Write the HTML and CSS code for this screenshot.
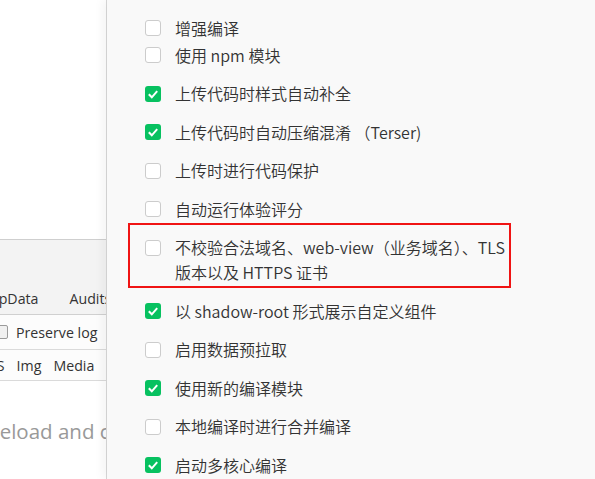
FILE: index.html
```html
<!DOCTYPE html>
<html lang="zh-CN">
<head>
  <meta charset="UTF-8" />
  <meta name="viewport" content="width=device-width, initial-scale=1.0"/>
  <title>详情 - 本地设置</title>
  <link rel="stylesheet" href="styles.css">
</head>
<body>

  <div class="page">
    <!-- devtools behind the panel -->
    <div class="devtools">
      <div class="dt-top"></div>
      <div class="dt-tabs">
        <span class="tab first">AppData</span>
        <span class="tab">Audits</span>
      </div>
      <div class="dt-filter">
        <span class="mini-check"></span>
        <span>Preserve log</span>
      </div>
      <div class="dt-types">
        <span class="first">JS</span>
        <span>Img</span>
        <span>Media</span>
      </div>
      <div class="dt-empty">
        <span>Reload and capture</span>
      </div>
    </div>

    <!-- local settings -->
    <div class="settings">
      <ul class="opts">
        <li class="opt tight"><span class="check"></span><span class="opt-text">增强编译</span></li>
        <li class="opt"><span class="check"></span><span class="opt-text">使用 npm 模块</span></li>
        <li class="opt"><span class="check on"></span><span class="opt-text">上传代码时样式自动补全</span></li>
        <li class="opt"><span class="check on"></span><span class="opt-text">上传代码时自动压缩混淆 （Terser)</span></li>
        <li class="opt"><span class="check"></span><span class="opt-text">上传时进行代码保护</span></li>
        <li class="opt"><span class="check"></span><span class="opt-text">自动运行体验评分</span></li>
        <li class="opt marked">
          <span class="check"></span>
          <span class="opt-text">不校验合法域名、web-view（业务域名）、TLS 版本以及 HTTPS 证书</span>
          <span class="mark"></span>
        </li>
        <li class="opt"><span class="check on"></span><span class="opt-text">以 shadow-root 形式展示自定义组件</span></li>
        <li class="opt"><span class="check"></span><span class="opt-text">启用数据预拉取</span></li>
        <li class="opt"><span class="check on"></span><span class="opt-text">使用新的编译模块</span></li>
        <li class="opt"><span class="check"></span><span class="opt-text">本地编译时进行合并编译</span></li>
        <li class="opt"><span class="check on"></span><span class="opt-text">启动多核心编译</span></li>
      </ul>
    </div>
  </div>

</body>
</html>
```

FILE: styles.css
```css
body {
  margin: 0;
  padding: 0;
  height: 479px;
  overflow: hidden;
  background: #fff;
}

.page {
  display: flex;
  height: 479px;
}

/* ---- devtools (left, mostly covered) ---- */

.devtools {
  width: 106px;
  flex-shrink: 0;
  overflow: hidden;
  border-right: 1px solid #d9d9d9;
  font-family: 'Open Sans', 'Noto Sans', sans-serif;
  font-size: 14.2px;
  color: #333;
  white-space: nowrap;
}

.dt-top {
  height: 239px;
  background: #fff;
  border-bottom: 1px solid #cfcfcf;
}

.dt-tabs {
  height: 75px;
  background: #f3f3f3;
  border-bottom: 1px solid #d0d0d0;
  display: flex;
  align-items: flex-end;
  padding-bottom: 5px;
  box-sizing: border-box;
  line-height: 20px;
}

.dt-tabs .first {
  margin-left: -19px;
}

.dt-tabs .tab + .tab {
  margin-left: 31px;
}

.dt-filter {
  height: 34px;
  border-bottom: 1px solid #dadada;
  display: flex;
  align-items: center;
  gap: 8px;
  background: #fcfcfc;
}

.mini-check {
  width: 12px;
  height: 12px;
  margin-left: -6px;
  border: 1px solid #9a9a9a;
  border-radius: 2px;
  background: #f0f0f0;
}

.dt-types {
  height: 30px;
  border-bottom: 1px solid #dadada;
  display: flex;
  align-items: center;
  gap: 12px;
  background: #fcfcfc;
}

.dt-types .first {
  margin-left: -7px;
}

.dt-empty {
  padding-top: 38px;
  font-size: 20.5px;
  line-height: 24px;
  color: #999;
}

.dt-empty span {
  display: block;
  margin-left: -13px;
}

/* ---- settings panel ---- */

.settings {
  flex: 1;
  background: #f9f9f9;
  box-shadow: -4px 0 10px rgba(0, 0, 0, 0.05);
  font-family: 'Noto Sans CJK SC', 'Noto Sans', sans-serif;
  font-weight: 350;
  font-size: 16px;
  color: #333;
}

.opts {
  list-style: none;
  margin: 0;
  padding: 15.5px 0 0 38px;
}

.opt {
  display: flex;
  align-items: flex-start;
  gap: 14px;
  line-height: 25px;
  margin-bottom: 13.5px;
}

.opt.tight {
  margin-bottom: 2px;
}

.opt-text {
  max-width: 330px;
}

.check {
  flex-shrink: 0;
  width: 16px;
  height: 16px;
  margin-top: 4.5px;
  box-sizing: border-box;
  border: 1px solid #cccccc;
  border-radius: 3px;
  background: #fff;
}

.check.on {
  border: none;
  background: #07c160 url("data:image/svg+xml,%3Csvg xmlns='http://www.w3.org/2000/svg' viewBox='0 0 16 16'%3E%3Cpath d='M3.8 8.3 6.8 11.3 12.2 5.2' fill='none' stroke='%23fff' stroke-width='2'/%3E%3C/svg%3E") center / 16px 16px no-repeat;
}

.marked {
  position: relative;
}

.mark {
  position: absolute;
  left: -17px;
  top: -12px;
  width: 383px;
  height: 65px;
  box-sizing: border-box;
  border: 2px solid #f01414;
}
```
